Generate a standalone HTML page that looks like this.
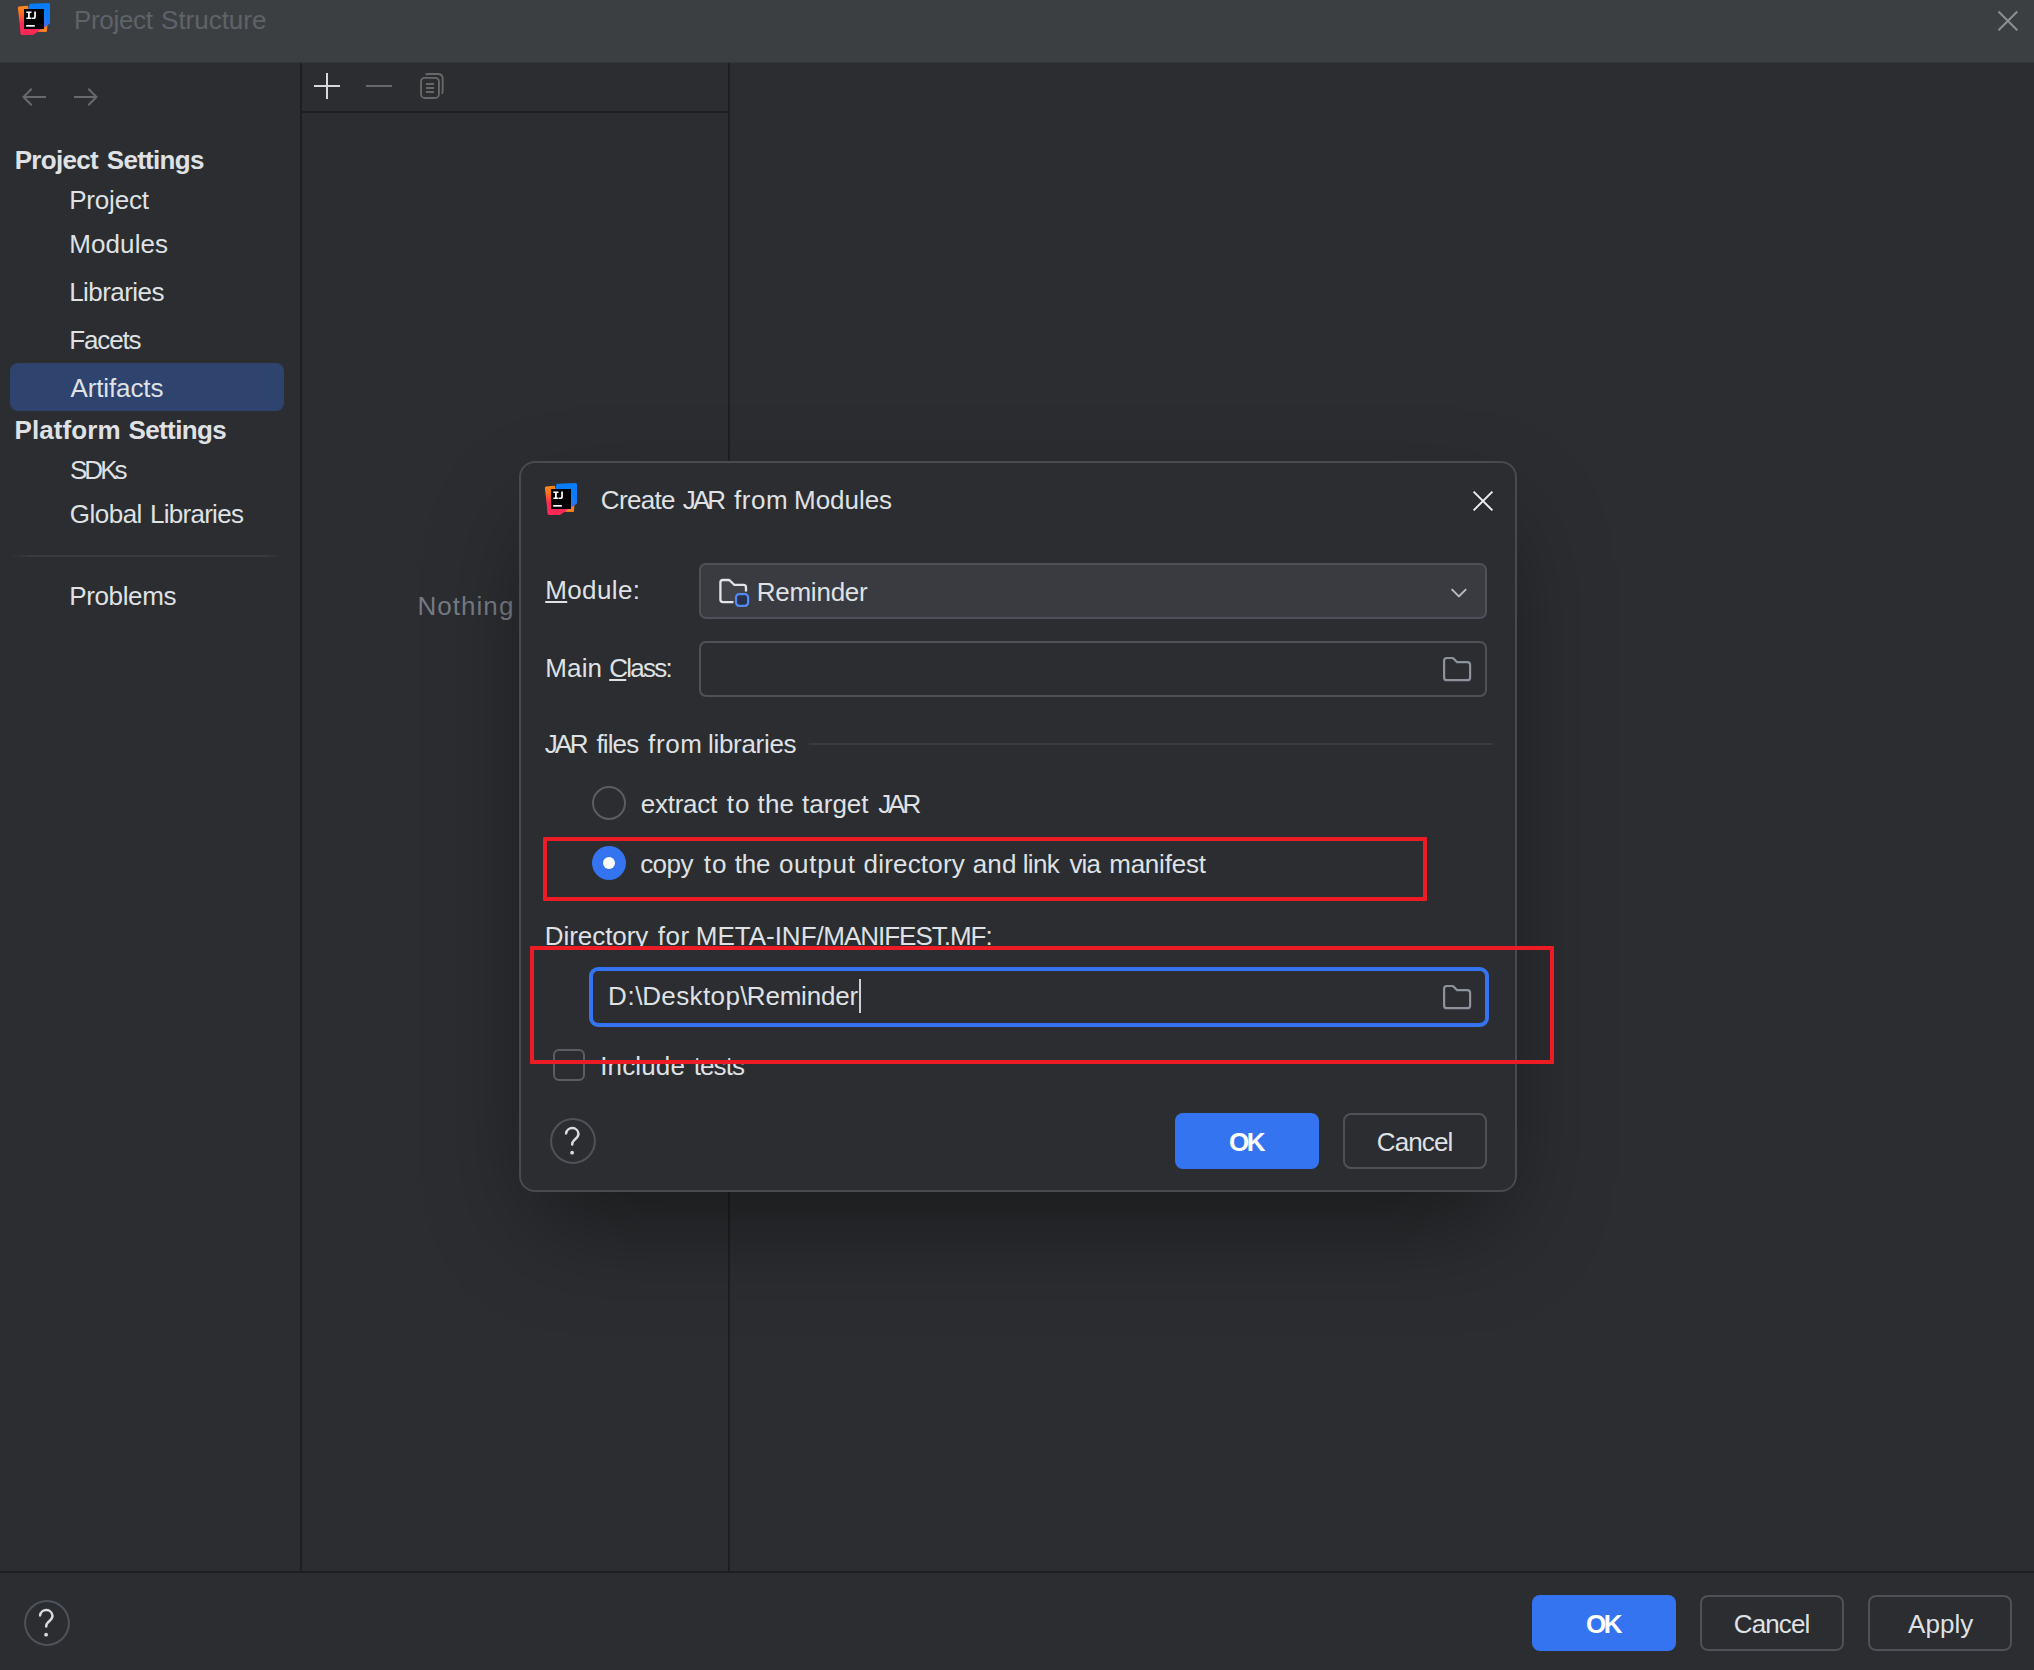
<!DOCTYPE html>
<html><head><meta charset="utf-8"><title>Project Structure</title>
<style>
html,body{margin:0;padding:0;}
body{width:2034px;height:1670px;overflow:hidden;background:#2b2d30;position:relative;font-family:"Liberation Sans",sans-serif;}
.t{position:absolute;white-space:pre;line-height:30px;font-family:"Liberation Sans",sans-serif;}
.abs{position:absolute;}
.ij,.ic{position:absolute;overflow:visible;}
u{text-decoration:underline;text-decoration-thickness:2px;text-underline-offset:2.2px;}
.btn{position:absolute;box-sizing:border-box;border-radius:8px;}
.btn.sec{border:2px solid #4e5157;}
.btn.pri{background:#3574f0;}
</style></head><body>

<div class="abs" style="left:0;top:0;width:2034px;height:62px;background:#3c3f41;"></div>
<div class="abs" style="left:0;top:62px;width:2034px;height:1px;background:#34363a;"></div>
<svg class="ij" style="left:18px;top:3px" width="32" height="32" viewBox="0 0 32 32">
<defs>
<linearGradient id="g1a" gradientUnits="userSpaceOnUse" x1="5" y1="3" x2="5" y2="31"><stop offset="0" stop-color="#fd8a1c"/><stop offset="0.25" stop-color="#fc7022"/><stop offset="0.62" stop-color="#fe2857"/><stop offset="1" stop-color="#fe2857"/></linearGradient>
<linearGradient id="g2a" gradientUnits="userSpaceOnUse" x1="6" y1="31" x2="30" y2="14"><stop offset="0" stop-color="#fe2857"/><stop offset="0.42" stop-color="#fe2857"/><stop offset="0.66" stop-color="#a84cc0"/><stop offset="0.86" stop-color="#3f74ee"/><stop offset="1" stop-color="#087cfa"/></linearGradient>
</defs>
<path d="M18 22 H29.4 L29 28 Q28.9 29.1 27.8 29.1 L18 28.7 Z" fill="#fc801d"/>
<path d="M2 14 L2.7 30.8 Q2.8 31.9 3.9 31.9 L14.4 31.9 Q15.1 31.9 15.7 31.5 L31.3 20.8 L24 9 Z" fill="url(#g2a)"/>
<path d="M10 6.5 L11.4 1.6 Q11.7 0.7 12.6 0.65 L30.5 0 Q32 0 32 1.5 L32 19.6 Q32 20.4 31.3 20.8 L25.5 24.6 Z" fill="#087cfa"/>
<path d="M26 10 L32 12 L32 19.6 Q32 20.4 31.3 20.8 L25.5 24.6 L24 18 Z" fill="url(#g2a)" opacity="0.55"/>
<path d="M-0.1 5 Q-0.2 3.7 1.1 3.55 L9.2 2.85 Q9.9 2.8 10 3.5 L12 18 L3 31.6 Q2.7 31.5 2.7 30.8 Z" fill="url(#g1a)"/>
<rect x="6" y="6" width="20" height="20" fill="#000"/>
<rect x="8.2" y="22" width="8.6" height="1.7" fill="#fff"/>
<path d="M8.3 8.6 H13.5 V10.1 H11.8 V14.4 H13.5 V15.9 H8.3 V14.4 H10 V10.1 H8.3 Z" fill="#fff"/>
<path d="M14.9 8.6 H17.9 V13.4 Q17.9 16 15.4 16 Q14.4 16 13.9 15.7 L14.3 14.3 Q14.8 14.5 15.2 14.5 Q16.2 14.5 16.2 13.3 V8.6 Z" fill="#fff"/>
</svg>
<div class="t" style="left:73.90px;top:5.0px;color:#5f6369;font-weight:400;font-size:26px;letter-spacing:-0.299px;">Project</div>
<div class="t" style="left:161.10px;top:5.0px;color:#5f6369;font-weight:400;font-size:26px;letter-spacing:-0.028px;">Structure</div>
<svg class="ic" style="left:1996px;top:9px" width="24" height="24" viewBox="0 0 24 24" stroke="#8c8d8f" stroke-width="2.1" stroke-linecap="butt"><path d="M2.5 2.5 L21.3 21.3 M21.3 2.5 L2.5 21.3"/></svg>
<div class="abs" style="left:300px;top:63px;width:2px;height:1509px;background:#1e1f22;"></div>
<div class="abs" style="left:728px;top:63px;width:2px;height:1509px;background:#1e1f22;"></div>
<div class="abs" style="left:302px;top:111px;width:426px;height:2px;background:#1e1f22;"></div>
<div class="abs" style="left:0;top:1571px;width:2034px;height:2px;background:#1e1f22;"></div>
<svg class="ic" style="left:20px;top:84px" width="28" height="26" viewBox="0 0 28 26" fill="none" stroke="#68696c" stroke-width="2" stroke-linecap="butt" stroke-linejoin="miter"><path d="M26 13 H4 M11.7 4.7 L3.5 13 L11.7 21.3"/></svg>
<svg class="ic" style="left:72px;top:84px" width="28" height="26" viewBox="0 0 28 26" fill="none" stroke="#68696c" stroke-width="2" stroke-linecap="butt" stroke-linejoin="miter"><path d="M2 13 H24 M16.3 4.7 L24.5 13 L16.3 21.3"/></svg>
<svg class="ic" style="left:312px;top:72px" width="30" height="30" viewBox="0 0 30 30" stroke="#d6d8dd" stroke-width="2" stroke-linecap="butt"><path d="M15 1 V27 M2 14 H28"/></svg>
<svg class="ic" style="left:364px;top:72px" width="30" height="30" viewBox="0 0 30 30" stroke="#686868" stroke-width="2" stroke-linecap="butt"><path d="M2 14 H28"/></svg>
<svg class="ic" style="left:418px;top:72px" width="28" height="28" viewBox="0 0 28 28" fill="none" stroke="#686868" stroke-width="1.9" stroke-linejoin="round" stroke-linecap="butt"><path d="M7.6 2.6 Q8.6 1.95 10 1.95 H20 Q24.65 1.95 24.65 6.6 V19 Q24.65 20.8 23.7 21.7"/><rect x="3.05" y="5.85" width="17.9" height="20.2" rx="3.8"/><path d="M8 12 H16 M8 16 H16 M8 20 H16"/></svg>
<div class="t" style="left:14.70px;top:145.0px;color:#dfe1e5;font-weight:700;font-size:26px;letter-spacing:-0.714px;">Project</div>
<div class="t" style="left:106.80px;top:145.0px;color:#dfe1e5;font-weight:700;font-size:26px;letter-spacing:-0.715px;">Settings</div>
<div class="t" style="left:69.20px;top:185.0px;color:#dfe1e5;font-weight:400;font-size:26px;letter-spacing:-0.199px;">Project</div>
<div class="t" style="left:69.20px;top:229.0px;color:#dfe1e5;font-weight:400;font-size:26px;letter-spacing:0.104px;">Modules</div>
<div class="t" style="left:69.20px;top:277.0px;color:#dfe1e5;font-weight:400;font-size:26px;letter-spacing:-0.551px;">Libraries</div>
<div class="t" style="left:69.30px;top:324.8px;color:#dfe1e5;font-weight:400;font-size:26px;letter-spacing:-1.165px;">Facets</div>
<div class="abs" style="left:10px;top:363px;width:274px;height:48px;border-radius:8px;background:#2e436e;"></div>
<div class="t" style="left:70.40px;top:373.0px;color:#dfe1e5;font-weight:400;font-size:26px;letter-spacing:-0.101px;">Artifacts</div>
<div class="t" style="left:14.60px;top:415.0px;color:#dfe1e5;font-weight:700;font-size:26px;letter-spacing:0.080px;">Platform</div>
<div class="t" style="left:128.50px;top:415.0px;color:#dfe1e5;font-weight:700;font-size:26px;letter-spacing:-0.615px;">Settings</div>
<div class="t" style="left:70.00px;top:454.6px;color:#dfe1e5;font-weight:400;font-size:26px;letter-spacing:-2.987px;">SDKs</div>
<div class="t" style="left:69.80px;top:498.6px;color:#dfe1e5;font-weight:400;font-size:26px;letter-spacing:-0.516px;">Global</div>
<div class="t" style="left:149.90px;top:498.6px;color:#dfe1e5;font-weight:400;font-size:26px;letter-spacing:-0.714px;">Libraries</div>
<div class="abs" style="left:10px;top:555px;width:274px;height:2px;background:linear-gradient(90deg,rgba(57,59,64,0),#393b40 8%,#393b40 92%,rgba(57,59,64,0));"></div>
<div class="t" style="left:69.30px;top:580.8px;color:#dfe1e5;font-weight:400;font-size:26px;letter-spacing:-0.388px;">Problems</div>
<div class="t" style="left:417.40px;top:591.0px;color:#777b83;font-weight:400;font-size:26px;letter-spacing:1.057px;">Nothing</div>
<svg class="ic" style="left:23.9px;top:1600.4px" width="46" height="46" viewBox="0 0 46 46" fill="none"><circle cx="23" cy="23" r="21.9" stroke="#4e525a" stroke-width="2"/><path d="M16.1 15.4 A6.25 6.25 0 0 1 28.5 15.8 C28.5 18.9 26.2 20.3 24.4 21.9 C22.8 23.3 22.2 24.6 22.2 26.6" stroke="#d9dbdf" stroke-width="2.5" stroke-linecap="round"/><circle cx="22.1" cy="34.7" r="1.9" fill="#d9dbdf"/></svg>
<div class="btn pri" style="left:1532px;top:1595px;width:144px;height:56px;"></div>
<div class="t" style="left:1585.90px;top:1608.9px;color:#fff;font-weight:700;font-size:26px;letter-spacing:-2.424px;">OK</div>
<div class="btn sec" style="left:1700px;top:1595px;width:144px;height:56px;"></div>
<div class="t" style="left:1733.80px;top:1608.9px;color:#dfe1e5;font-weight:400;font-size:26px;letter-spacing:-0.891px;">Cancel</div>
<div class="btn sec" style="left:1868px;top:1595px;width:144px;height:56px;"></div>
<div class="t" style="left:1908.10px;top:1608.9px;color:#dfe1e5;font-weight:400;font-size:26px;letter-spacing:0.015px;">Apply</div>
<div class="abs" style="left:519px;top:461px;width:998px;height:731px;box-sizing:border-box;border:2px solid #484a4f;border-radius:16px;background:#2b2d30;box-shadow:0 45px 100px -20px rgba(0,0,0,0.46);"></div>
<svg class="ij" style="left:545px;top:483px" width="32" height="32" viewBox="0 0 32 32">
<defs>
<linearGradient id="g1b" gradientUnits="userSpaceOnUse" x1="5" y1="3" x2="5" y2="31"><stop offset="0" stop-color="#fd8a1c"/><stop offset="0.25" stop-color="#fc7022"/><stop offset="0.62" stop-color="#fe2857"/><stop offset="1" stop-color="#fe2857"/></linearGradient>
<linearGradient id="g2b" gradientUnits="userSpaceOnUse" x1="6" y1="31" x2="30" y2="14"><stop offset="0" stop-color="#fe2857"/><stop offset="0.42" stop-color="#fe2857"/><stop offset="0.66" stop-color="#a84cc0"/><stop offset="0.86" stop-color="#3f74ee"/><stop offset="1" stop-color="#087cfa"/></linearGradient>
</defs>
<path d="M18 22 H29.4 L29 28 Q28.9 29.1 27.8 29.1 L18 28.7 Z" fill="#fc801d"/>
<path d="M2 14 L2.7 30.8 Q2.8 31.9 3.9 31.9 L14.4 31.9 Q15.1 31.9 15.7 31.5 L31.3 20.8 L24 9 Z" fill="url(#g2b)"/>
<path d="M10 6.5 L11.4 1.6 Q11.7 0.7 12.6 0.65 L30.5 0 Q32 0 32 1.5 L32 19.6 Q32 20.4 31.3 20.8 L25.5 24.6 Z" fill="#087cfa"/>
<path d="M26 10 L32 12 L32 19.6 Q32 20.4 31.3 20.8 L25.5 24.6 L24 18 Z" fill="url(#g2b)" opacity="0.55"/>
<path d="M-0.1 5 Q-0.2 3.7 1.1 3.55 L9.2 2.85 Q9.9 2.8 10 3.5 L12 18 L3 31.6 Q2.7 31.5 2.7 30.8 Z" fill="url(#g1b)"/>
<rect x="6" y="6" width="20" height="20" fill="#000"/>
<rect x="8.2" y="22" width="8.6" height="1.7" fill="#fff"/>
<path d="M8.3 8.6 H13.5 V10.1 H11.8 V14.4 H13.5 V15.9 H8.3 V14.4 H10 V10.1 H8.3 Z" fill="#fff"/>
<path d="M14.9 8.6 H17.9 V13.4 Q17.9 16 15.4 16 Q14.4 16 13.9 15.7 L14.3 14.3 Q14.8 14.5 15.2 14.5 Q16.2 14.5 16.2 13.3 V8.6 Z" fill="#fff"/>
</svg>
<div class="t" style="left:600.80px;top:484.6px;color:#dfe1e5;font-weight:400;font-size:26px;letter-spacing:-0.676px;">Create</div>
<div class="t" style="left:682.80px;top:484.6px;color:#dfe1e5;font-weight:400;font-size:26px;letter-spacing:-2.921px;">JAR</div>
<div class="t" style="left:734.00px;top:484.6px;color:#dfe1e5;font-weight:400;font-size:26px;letter-spacing:0.519px;">from</div>
<div class="t" style="left:794.10px;top:484.6px;color:#dfe1e5;font-weight:400;font-size:26px;letter-spacing:-0.046px;">Modules</div>
<svg class="ic" style="left:1471px;top:489px" width="24" height="24" viewBox="0 0 24 24" stroke="#f0f1f2" stroke-width="1.9" stroke-linecap="butt"><path d="M2.6 2.6 L21.4 21.4 M21.4 2.6 L2.6 21.4"/></svg>
<div class="t" style="left:545.20px;top:575.0px;color:#dfe1e5;font-weight:400;font-size:26px;letter-spacing:0.388px;"><u>M</u>odule:</div>
<div class="abs" style="left:699px;top:563px;width:788px;height:56px;box-sizing:border-box;border:2px solid #4e5157;border-radius:7px;background:#393b40;"></div>
<svg class="ic" style="left:718px;top:577px" width="34" height="32" viewBox="0 0 34 32" fill="none" stroke-linejoin="round"><path d="M15.5 25.1 H5 Q2.4 25.1 2.4 22.5 V5.6 Q2.4 3 5 3 H10.4 Q11.4 3 12.1 3.7 L16.2 7.8 H25.4 Q28 7.8 28 10.4 V14.6" stroke="#e3e4e8" stroke-width="2.3" fill="rgba(255,255,255,0.045)"/><rect x="18" y="17.1" width="12.1" height="11.7" rx="3.2" fill="#25324d" stroke="#548af7" stroke-width="2.2"/></svg>
<div class="t" style="left:756.70px;top:577.2px;color:#dfe1e5;font-weight:400;font-size:26px;letter-spacing:-0.236px;">Reminder</div>
<svg class="ic" style="left:1449px;top:586px" width="20" height="14" viewBox="0 0 20 14" fill="none" stroke="#b9bcc3" stroke-width="2" stroke-linecap="butt" stroke-linejoin="round"><path d="M2.6 3.1 L9.9 10.4 L17.2 3.1"/></svg>
<div class="t" style="left:545.30px;top:652.6px;color:#dfe1e5;font-weight:400;font-size:26px;letter-spacing:0.135px;">Main</div>
<div class="t" style="left:609.20px;top:652.6px;color:#dfe1e5;font-weight:400;font-size:26px;letter-spacing:-1.723px;"><u>C</u>lass:</div>
<div class="abs" style="left:699px;top:641px;width:788px;height:56px;box-sizing:border-box;border:2px solid #4e5157;border-radius:7px;"></div>
<svg class="ic" style="left:1442px;top:656px" width="30" height="26" viewBox="0 0 30 26" fill="none" stroke="#8d929c" stroke-width="2.2" stroke-linejoin="round">
<path d="M2.1 4.8 Q2.1 2 4.9 2 H10.2 Q11 2 11.6 2.6 L15.2 6.2 H25.3 Q28.1 6.2 28.1 9 V21.4 Q28.1 24.2 25.3 24.2 H4.9 Q2.1 24.2 2.1 21.4 Z"/>
</svg>
<div class="t" style="left:544.80px;top:729.0px;color:#dfe1e5;font-weight:400;font-size:26px;letter-spacing:-2.721px;">JAR</div>
<div class="t" style="left:596.40px;top:729.0px;color:#dfe1e5;font-weight:400;font-size:26px;letter-spacing:-0.859px;">files</div>
<div class="t" style="left:648.10px;top:729.0px;color:#dfe1e5;font-weight:400;font-size:26px;letter-spacing:0.586px;">from</div>
<div class="t" style="left:708.00px;top:729.0px;color:#dfe1e5;font-weight:400;font-size:26px;letter-spacing:-0.303px;">libraries</div>
<div class="abs" style="left:809px;top:743px;width:684px;height:2px;background:#393b40;"></div>
<div class="abs" style="left:592px;top:786px;width:34px;height:34px;box-sizing:border-box;border:2px solid #5a5d63;border-radius:50%;"></div>
<div class="t" style="left:640.80px;top:788.8px;color:#dfe1e5;font-weight:400;font-size:26px;letter-spacing:-0.284px;">extract</div>
<div class="t" style="left:726.70px;top:788.8px;color:#dfe1e5;font-weight:400;font-size:26px;letter-spacing:1.076px;">to</div>
<div class="t" style="left:757.60px;top:788.8px;color:#dfe1e5;font-weight:400;font-size:26px;letter-spacing:0.158px;">the</div>
<div class="t" style="left:802.10px;top:788.8px;color:#dfe1e5;font-weight:400;font-size:26px;letter-spacing:-0.012px;">target</div>
<div class="t" style="left:878.20px;top:788.8px;color:#dfe1e5;font-weight:400;font-size:26px;letter-spacing:-3.071px;">JAR</div>
<div class="abs" style="left:592px;top:846px;width:34px;height:34px;border-radius:50%;background:#3574f0;"></div>
<div class="abs" style="left:603px;top:857px;width:12px;height:12px;border-radius:50%;background:#fff;"></div>
<div class="t" style="left:640.20px;top:848.8px;color:#dfe1e5;font-weight:400;font-size:26px;letter-spacing:-0.573px;">copy</div>
<div class="t" style="left:703.70px;top:848.8px;color:#dfe1e5;font-weight:400;font-size:26px;letter-spacing:0.976px;">to</div>
<div class="t" style="left:734.70px;top:848.8px;color:#dfe1e5;font-weight:400;font-size:26px;letter-spacing:-0.142px;">the</div>
<div class="t" style="left:778.90px;top:848.8px;color:#dfe1e5;font-weight:400;font-size:26px;letter-spacing:0.747px;">output</div>
<div class="t" style="left:863.50px;top:848.8px;color:#dfe1e5;font-weight:400;font-size:26px;letter-spacing:0.200px;">directory</div>
<div class="t" style="left:972.70px;top:848.8px;color:#dfe1e5;font-weight:400;font-size:26px;letter-spacing:0.190px;">and</div>
<div class="t" style="left:1022.80px;top:848.8px;color:#dfe1e5;font-weight:400;font-size:26px;letter-spacing:-0.704px;">link</div>
<div class="t" style="left:1069.50px;top:848.8px;color:#dfe1e5;font-weight:400;font-size:26px;letter-spacing:-0.938px;">via</div>
<div class="t" style="left:1109.20px;top:848.8px;color:#dfe1e5;font-weight:400;font-size:26px;letter-spacing:-0.220px;">manifest</div>
<div class="abs" style="left:543.3px;top:837px;width:884px;height:64px;box-sizing:border-box;border:4px solid #ed1c24;border-radius:1px;"></div>
<div class="t" style="left:544.80px;top:920.8px;color:#dfe1e5;font-weight:400;font-size:26px;letter-spacing:-0.064px;">Directory</div>
<div class="t" style="left:657.70px;top:920.8px;color:#dfe1e5;font-weight:400;font-size:26px;letter-spacing:0.608px;">for</div>
<div class="t" style="left:695.80px;top:920.8px;color:#dfe1e5;font-weight:400;font-size:26px;letter-spacing:-0.017px;">META-INF/</div>
<div class="t" style="left:823.30px;top:920.8px;color:#dfe1e5;font-weight:400;font-size:26px;letter-spacing:-1.012px;">MANIFEST.MF:</div>
<div class="abs" style="left:553px;top:1049.3px;width:32px;height:32px;box-sizing:border-box;border:2px solid #5a5d63;border-radius:6px;"></div>
<div class="t" style="left:600.20px;top:1051.0px;color:#dfe1e5;font-weight:400;font-size:26px;letter-spacing:0.137px;">Include</div>
<div class="t" style="left:693.70px;top:1051.0px;color:#dfe1e5;font-weight:400;font-size:26px;letter-spacing:-0.877px;">tests</div>
<div class="abs" style="left:589px;top:967px;width:900px;height:60px;box-sizing:border-box;border:4px solid #3574f0;border-radius:9px;"></div>
<div class="t" style="left:608.00px;top:981.0px;color:#dfe1e5;font-weight:400;font-size:26px;letter-spacing:0.650px;">D:&#92;</div>
<div class="t" style="left:642.20px;top:981.0px;color:#dfe1e5;font-weight:400;font-size:26px;letter-spacing:0.389px;">Desktop&#92;</div>
<div class="t" style="left:746.80px;top:981.0px;color:#dfe1e5;font-weight:400;font-size:26px;letter-spacing:-0.193px;">Reminder</div>
<div class="abs" style="left:859px;top:979px;width:2px;height:34px;background:#ced0d6;"></div>
<svg class="ic" style="left:1442px;top:984px" width="30" height="26" viewBox="0 0 30 26" fill="none" stroke="#8d929c" stroke-width="2.2" stroke-linejoin="round">
<path d="M2.1 4.8 Q2.1 2 4.9 2 H10.2 Q11 2 11.6 2.6 L15.2 6.2 H25.3 Q28.1 6.2 28.1 9 V21.4 Q28.1 24.2 25.3 24.2 H4.9 Q2.1 24.2 2.1 21.4 Z"/>
</svg>
<div class="abs" style="left:530px;top:946px;width:1024px;height:118px;box-sizing:border-box;border:4px solid #ed1c24;border-radius:1px;"></div>
<svg class="ic" style="left:549.9px;top:1117.7px" width="46" height="46" viewBox="0 0 46 46" fill="none"><circle cx="23" cy="23" r="21.9" stroke="#4e525a" stroke-width="2"/><path d="M16.1 15.4 A6.25 6.25 0 0 1 28.5 15.8 C28.5 18.9 26.2 20.3 24.4 21.9 C22.8 23.3 22.2 24.6 22.2 26.6" stroke="#d9dbdf" stroke-width="2.5" stroke-linecap="round"/><circle cx="22.1" cy="34.7" r="1.9" fill="#d9dbdf"/></svg>
<div class="btn pri" style="left:1175px;top:1113px;width:144px;height:56px;"></div>
<div class="t" style="left:1228.90px;top:1126.6px;color:#fff;font-weight:700;font-size:26px;letter-spacing:-2.424px;">OK</div>
<div class="btn sec" style="left:1343px;top:1113px;width:144px;height:56px;"></div>
<div class="t" style="left:1376.80px;top:1126.6px;color:#dfe1e5;font-weight:400;font-size:26px;letter-spacing:-0.891px;">Cancel</div>
</body></html>
